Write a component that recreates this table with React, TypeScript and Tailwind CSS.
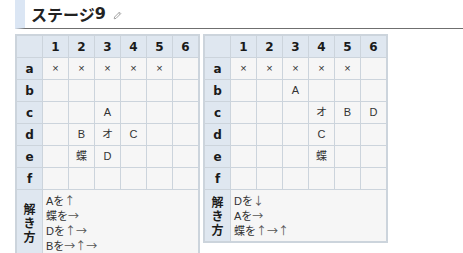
import React from "react";

type Grid = {
  rows: string[][];
  steps: string[];
};

const COLS = ["1", "2", "3", "4", "5", "6"];
const ROWS = ["a", "b", "c", "d", "e", "f"];

const stages: Grid[] = [
  {
    rows: [
      ["×", "×", "×", "×", "×", ""],
      ["", "", "", "", "", ""],
      ["", "", "A", "", "", ""],
      ["", "B", "オ", "C", "", ""],
      ["", "蝶", "D", "", "", ""],
      ["", "", "", "", "", ""],
    ],
    steps: ["Aを↑", "蝶を→", "Dを↑→", "Bを→↑→"],
  },
  {
    rows: [
      ["×", "×", "×", "×", "×", ""],
      ["", "", "A", "", "", ""],
      ["", "", "", "オ", "B", "D"],
      ["", "", "", "C", "", ""],
      ["", "", "", "蝶", "", ""],
      ["", "", "", "", "", ""],
    ],
    steps: ["Dを↓", "Aを→", "蝶を↑→↑"],
  },
];

function Pencil() {
  return (
    <svg width="9" height="9" viewBox="0 0 9 9" className="ml-[7px] mt-[2px]">
      <path
        d="M1.2 7.8 L1.6 6 L6.4 1.2 L7.8 2.6 L3 7.4 Z M5.6 2 L7 3.4"
        fill="none"
        stroke="#9a9a9a"
        strokeWidth="0.9"
        strokeLinejoin="round"
      />
    </svg>
  );
}

// Arrow glyphs are set in the CJK face so they keep their full width.
function Step({ text }: { text: string }) {
  const parts = text.split(/([↑↓→←]+)/).filter(Boolean);
  return (
    <div>
      {parts.map((p, i) =>
        /[↑↓→←]/.test(p) ? (
          <span key={i} className="font-['Noto_Sans_CJK_JP',sans-serif] text-[#555]">
            {p}
          </span>
        ) : (
          <span key={i}>{p}</span>
        )
      )}
    </div>
  );
}

function StageTable({ data }: { data: Grid }) {
  return (
    <table className="border-separate border-spacing-[1px] bg-[#ccd4dc] p-px font-['Liberation_Sans','Noto_Sans_CJK_JP',sans-serif] text-[11px] text-[#333]">
      <tbody>
        <tr className="h-[21px]">
          <th className="w-[25px] bg-[#dfe7f0] p-0" />
          {COLS.map((c) => (
            <th
              key={c}
              className="w-[25px] bg-[#dfe7f0] p-0 text-center font-['DejaVu_Sans',sans-serif] text-[12px] font-bold text-[#1a1a1a]"
            >
              {c}
            </th>
          ))}
        </tr>
        {data.rows.map((row, i) => (
          <tr key={ROWS[i]} className="h-[21px]">
            <th className="bg-[#dfe7f0] p-0 text-center font-['DejaVu_Sans',sans-serif] text-[12px] font-bold text-[#1a1a1a]">
              {ROWS[i]}
            </th>
            {row.map((cell, j) => (
              <td key={j} className="bg-[#f6f6f6] p-0 text-center">
                {cell}
              </td>
            ))}
          </tr>
        ))}
        <tr>
          <th className="bg-[#dfe7f0] p-0 text-center align-middle font-['Noto_Sans_CJK_JP',sans-serif] text-[12px] font-bold leading-[14px] text-[#1a1a1a]">
            解<br />き<br />方
          </th>
          <td colSpan={6} className="bg-[#f6f6f6] px-[3px] py-[3px] text-left leading-[14px]">
            {data.steps.map((s) => (
              <Step key={s} text={s} />
            ))}
          </td>
        </tr>
      </tbody>
    </table>
  );
}

export default function App() {
  return (
    <div className="min-h-[253px] w-[463px] bg-white">
      <h2 className="ml-[15px] flex h-[29px] items-center border-b border-l-[10px] border-b-[#6f6f6f] border-l-[#dbe6f4] pl-[6px] font-['Noto_Sans_CJK_JP',sans-serif] text-[16px] font-bold text-[#222]">
        <span>ステージ</span>
        <span className="font-['DejaVu_Sans',sans-serif]">9</span>
        <Pencil />
      </h2>
      <div className="ml-[15px] mt-[5px] flex items-start gap-[3px]">
        {stages.map((s, i) => (
          <StageTable key={i} data={s} />
        ))}
      </div>
    </div>
  );
}
